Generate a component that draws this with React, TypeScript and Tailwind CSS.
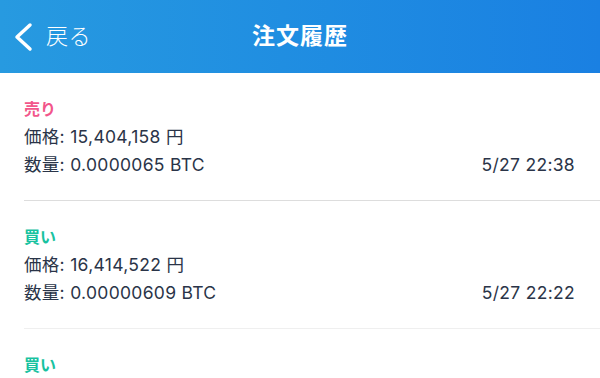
interface Order {
  side: 'buy' | 'sell';
  price: string;
  amount: string;
  time: string;
}

const orders: Order[] = [
  { side: 'sell', price: '15,404,158', amount: '0.0000065', time: '5/27 22:38' },
  { side: 'buy', price: '16,414,522', amount: '0.00000609', time: '5/27 22:22' },
  { side: 'buy', price: '16,402,110', amount: '0.00000610', time: '5/27 22:05' },
];

const font = { fontFamily: '"Inter", "Noto Sans CJK JP", sans-serif' };

export default function App() {
  return (
    <div className="w-[600px] h-[378px] overflow-hidden bg-white" style={font}>
      {/* Header */}
      <div className="relative h-[73px] flex items-center justify-center bg-gradient-to-r from-[#279ae0] to-[#1a80e2] text-white">
        <div className="absolute left-[12px] top-0 h-full flex items-center gap-[12px]">
          <svg width="22" height="30" viewBox="0 0 22 30" fill="none">
            <polyline
              points="18,3 5,15 18,27"
              stroke="white"
              strokeWidth="3.5"
              strokeLinecap="round"
              strokeLinejoin="round"
            />
          </svg>
          <span className="text-[22px] font-light tracking-[0.5px]">戻る</span>
        </div>
        <h1 className="text-[23px] font-bold tracking-[1px]">注文履歴</h1>
      </div>

      {/* Order list */}
      <div className="pl-6">
        {orders.map((o, i) => (
          <div
            key={i}
            className={`pt-[22px] pb-[21px] pr-[25px] border-b ${i === 0 ? 'border-[#dddddd]' : 'border-[#efefef]'}`}
          >
            <div
              className={`text-[16px] leading-[28px] font-bold ${o.side === 'sell' ? 'text-[#f2568b]' : 'text-[#18c29f]'}`}
            >
              {o.side === 'sell' ? '売り' : '買い'}
            </div>
            <div className="text-[17.5px] leading-[28px] tracking-[0.3px] text-[#2a3448]">
              価格: {o.price} 円
            </div>
            <div className="flex justify-between text-[17.5px] leading-[28px] tracking-[0.3px] text-[#2a3448]">
              <span>数量: {o.amount} BTC</span>
              <span>{o.time}</span>
            </div>
          </div>
        ))}
      </div>
    </div>
  );
}
